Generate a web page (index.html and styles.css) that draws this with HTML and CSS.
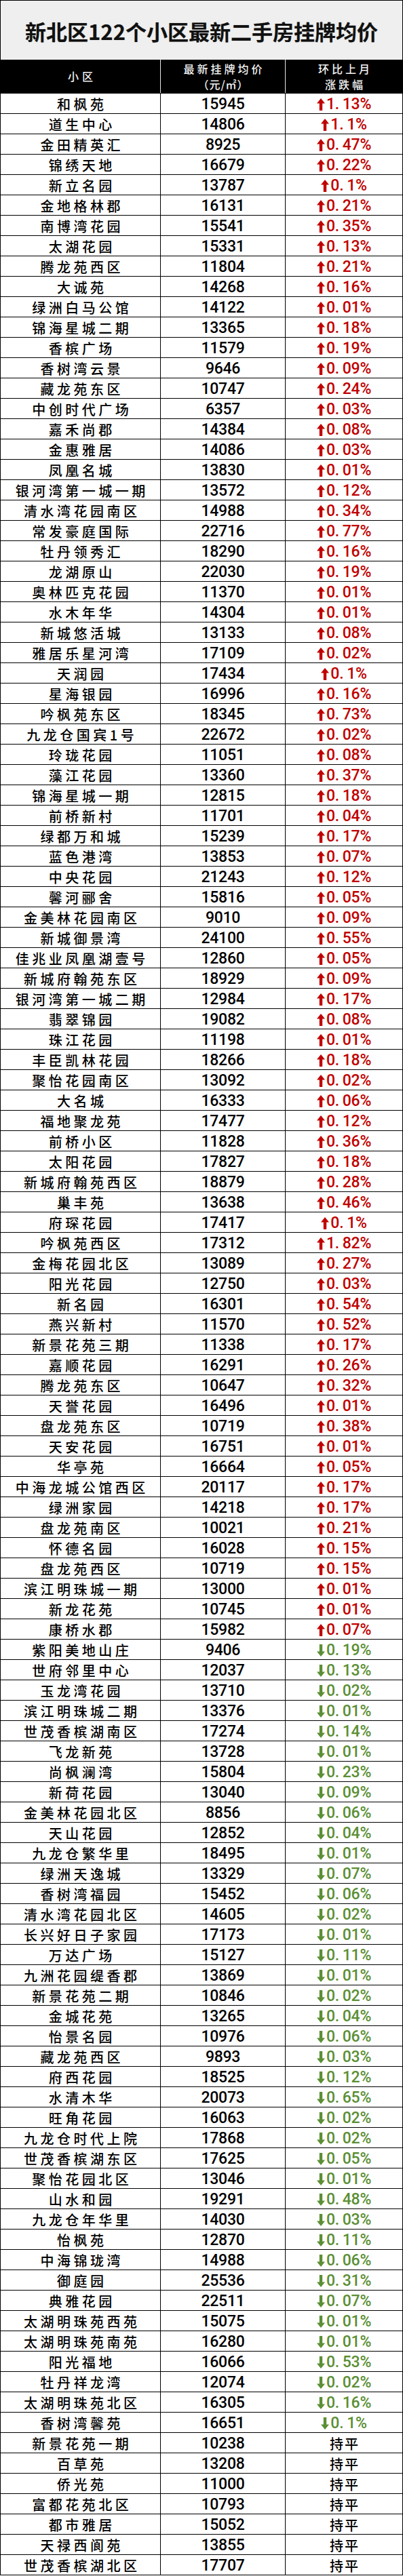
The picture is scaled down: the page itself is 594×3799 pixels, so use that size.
FILE: index.html
```html
<!DOCTYPE html>
<html lang="zh-CN">
<head>
<meta charset="utf-8">
<title>新北区122个小区最新二手房挂牌均价</title>
<link rel="stylesheet" href="styles.css">
</head>
<body>
<svg class="defs" width="0" height="0" aria-hidden="true">
  <defs>
    <path id="arrow-up" d="M6 0 L12 7.5 L8.2 7.5 L8.2 18 L3.8 18 L3.8 7.5 L0 7.5 Z"/>
    <path id="arrow-down" d="M6 18 L12 10.5 L8.2 10.5 L8.2 0 L3.8 0 L3.8 10.5 L0 10.5 Z"/>
  </defs>
</svg>
<div class="sheet">
  <div class="title">新北区122个小区最新二手房挂牌均价</div>
  <div class="row head">
    <div class="cell"><span class="hl">小区</span></div>
    <div class="cell col"><span class="hl">最新挂牌均价</span><span class="hl unit">（元/㎡）</span></div>
    <div class="cell col"><span class="hl">环比上月</span><span class="hl">涨跌幅</span></div>
  </div>
  <div id="rows"></div>
</div>
<script src="app.js"></script>
</body>
</html>
```

FILE: app.js
```js
var data = [
["和枫苑",15945,"u","1.13"],["道生中心",14806,"u","1.1"],["金田精英汇",8925,"u","0.47"],["锦绣天地",16679,"u","0.22"],
["新立名园",13787,"u","0.1"],["金地格林郡",16131,"u","0.21"],["南博湾花园",15541,"u","0.35"],["太湖花园",15331,"u","0.13"],
["腾龙苑西区",11804,"u","0.21"],["大诚苑",14268,"u","0.16"],["绿洲白马公馆",14122,"u","0.01"],["锦海星城二期",13365,"u","0.18"],
["香槟广场",11579,"u","0.19"],["香树湾云景",9646,"u","0.09"],["藏龙苑东区",10747,"u","0.24"],["中创时代广场",6357,"u","0.03"],
["嘉禾尚郡",14384,"u","0.08"],["金惠雅居",14086,"u","0.03"],["凤凰名城",13830,"u","0.01"],["银河湾第一城一期",13572,"u","0.12"],
["清水湾花园南区",14988,"u","0.34"],["常发豪庭国际",22716,"u","0.77"],["牡丹领秀汇",18290,"u","0.16"],["龙湖原山",22030,"u","0.19"],
["奥林匹克花园",11370,"u","0.01"],["水木年华",14304,"u","0.01"],["新城悠活城",13133,"u","0.08"],["雅居乐星河湾",17109,"u","0.02"],
["天润园",17434,"u","0.1"],["星海银园",16996,"u","0.16"],["吟枫苑东区",18345,"u","0.73"],["九龙仓国宾1号",22672,"u","0.02"],
["玲珑花园",11051,"u","0.08"],["藻江花园",13360,"u","0.37"],["锦海星城一期",12815,"u","0.18"],["前桥新村",11701,"u","0.04"],
["绿都万和城",15239,"u","0.17"],["蓝色港湾",13853,"u","0.07"],["中央花园",21243,"u","0.12"],["馨河郦舍",15816,"u","0.05"],
["金美林花园南区",9010,"u","0.09"],["新城御景湾",24100,"u","0.55"],["佳兆业凤凰湖壹号",12860,"u","0.05"],["新城府翰苑东区",18929,"u","0.09"],
["银河湾第一城二期",12984,"u","0.17"],["翡翠锦园",19082,"u","0.08"],["珠江花园",11198,"u","0.01"],["丰臣凯林花园",18266,"u","0.18"],
["聚怡花园南区",13092,"u","0.02"],["大名城",16333,"u","0.06"],["福地聚龙苑",17477,"u","0.12"],["前桥小区",11828,"u","0.36"],
["太阳花园",17827,"u","0.18"],["新城府翰苑西区",18879,"u","0.28"],["巢丰苑",13638,"u","0.46"],["府琛花园",17417,"u","0.1"],
["吟枫苑西区",17312,"u","1.82"],["金梅花园北区",13089,"u","0.27"],["阳光花园",12750,"u","0.03"],["新名园",16301,"u","0.54"],
["燕兴新村",11570,"u","0.52"],["新景花苑三期",11338,"u","0.17"],["嘉顺花园",16291,"u","0.26"],["腾龙苑东区",10647,"u","0.32"],
["天誉花园",16496,"u","0.01"],["盘龙苑东区",10719,"u","0.38"],["天安花园",16751,"u","0.01"],["华亭苑",16664,"u","0.05"],
["中海龙城公馆西区",20117,"u","0.17"],["绿洲家园",14218,"u","0.17"],["盘龙苑南区",10021,"u","0.21"],["怀德名园",16028,"u","0.15"],
["盘龙苑西区",10719,"u","0.15"],["滨江明珠城一期",13000,"u","0.01"],["新龙花苑",10745,"u","0.01"],["康桥水郡",15982,"u","0.07"],
["紫阳美地山庄",9406,"d","0.19"],["世府邻里中心",12037,"d","0.13"],["玉龙湾花园",13710,"d","0.02"],["滨江明珠城二期",13376,"d","0.01"],
["世茂香槟湖南区",17274,"d","0.14"],["飞龙新苑",13728,"d","0.01"],["尚枫澜湾",15804,"d","0.23"],["新荷花园",13040,"d","0.09"],
["金美林花园北区",8856,"d","0.06"],["天山花园",12852,"d","0.04"],["九龙仓繁华里",18495,"d","0.01"],["绿洲天逸城",13329,"d","0.07"],
["香树湾福园",15452,"d","0.06"],["清水湾花园北区",14605,"d","0.02"],["长兴好日子家园",17173,"d","0.01"],["万达广场",15127,"d","0.11"],
["九洲花园缇香郡",13869,"d","0.01"],["新景花苑二期",10846,"d","0.02"],["金城花苑",13265,"d","0.04"],["怡景名园",10976,"d","0.06"],
["藏龙苑西区",9893,"d","0.03"],["府西花园",18525,"d","0.12"],["水清木华",20073,"d","0.65"],["旺角花园",16063,"d","0.02"],
["九龙仓时代上院",17868,"d","0.02"],["世茂香槟湖东区",17625,"d","0.05"],["聚怡花园北区",13046,"d","0.01"],["山水和园",19291,"d","0.48"],
["九龙仓年华里",14030,"d","0.03"],["怡枫苑",12870,"d","0.11"],["中海锦珑湾",14988,"d","0.06"],["御庭园",25536,"d","0.31"],
["典雅花园",22511,"d","0.07"],["太湖明珠苑西苑",15075,"d","0.01"],["太湖明珠苑南苑",16280,"d","0.01"],["阳光福地",16066,"d","0.53"],
["牡丹祥龙湾",12074,"d","0.02"],["太湖明珠苑北区",16305,"d","0.16"],["香树湾馨苑",16651,"d","0.1"],
["新景花苑一期",10238,"f",""],["百草苑",13208,"f",""],["侨光苑",11000,"f",""],["富都花苑北区",10793,"f",""],
["都市雅居",15052,"f",""],["天禄西阆苑",13855,"f",""],["世茂香槟湖北区",17707,"f",""]
];
var html = "";
data.forEach(function (r) {
  var pct;
  if (r[2] === "f") {
    pct = '<div class="cell pct flat"><span class="flat-t">持平</span></div>';
  } else {
    var parts = r[3].split(".");
    var cls = r[2] === "u" ? "up" : "down";
    var id = r[2] === "u" ? "arrow-up" : "arrow-down";
    pct = '<div class="cell pct ' + cls + '"><svg class="arr" viewBox="0 0 12 18" width="12" height="18"><use href="#' + id + '"/></svg>' +
      '<span class="pv">' + parts[0] + '<span class="pt">.</span>' + parts[1] + '%</span></div>';
  }
  html += '<div class="row"><div class="cell name"><span class="nm">' + r[0] + '</span></div>' +
    '<div class="cell price">' + r[1] + '</div>' + pct + '</div>';
});
document.getElementById("rows").innerHTML = html;
```

FILE: styles.css
```css
html, body {
  margin: 0;
  padding: 0;
  background: #ffffff;
}

.defs {
  position: absolute;
  width: 0;
  height: 0;
}

.sheet {
  width: 594px;
  box-sizing: border-box;
  border-left: 1px solid #000;
  font-family: "Noto Sans CJK SC", "Noto Sans", sans-serif;
  color: #000;
}

.title {
  height: 88px;
  box-sizing: border-box;
  border-top: 1px solid #000;
  border-right: 1px solid #000;
  background: #efefef;
  display: flex;
  align-items: center;
  justify-content: center;
  padding-top: 2px;
  font-family: "Noto Sans CJK SC", sans-serif;
  font-weight: 700;
  font-size: 31px;
  letter-spacing: 0;
  color: #111;
  text-shadow: 0 0 1px rgba(0, 0, 0, 0.35);
}

.row {
  display: grid;
  grid-template-columns: 236px 184px 1fr;
  height: 30px;
  box-sizing: border-box;
  border-bottom: 1px solid #000;
}

.cell {
  border-right: 1px solid #000;
  display: flex;
  align-items: center;
  justify-content: center;
  overflow: hidden;
  white-space: nowrap;
}

.head {
  height: 50px;
  background: #000;
  border-bottom: 1px solid #000;
}

.head .cell {
  border-right: 1px solid #e6e6e6;
  color: #f2f2f2;
}

.head .cell:last-child {
  border-right-color: #000;
}

.head .col {
  flex-direction: column;
  gap: 0;
}

.hl {
  font-size: 16px;
  line-height: 23px;
  font-weight: 500;
  letter-spacing: 4px;
  padding-left: 4px;
}

.head .cell:first-child .hl {
  letter-spacing: 5px;
  padding-left: 5px;
}

.hl.unit {
  letter-spacing: 1px;
  padding-left: 1px;
}

.name {
  padding-top: 2px;
}

.nm {
  font-size: 20px;
  line-height: 26px;
  font-weight: 500;
  letter-spacing: 4.5px;
  padding-left: 4.5px;
}

.price {
  font-family: Roboto, "Liberation Sans", sans-serif;
  font-weight: 500;
  font-size: 23px;
  letter-spacing: -0.3px;
  padding-top: 3px;
  line-height: 26px;
}

.pct {
  border-right: 1px solid #000;
  padding-top: 3px;
  font-family: Roboto, "Liberation Sans", sans-serif;
  font-weight: 500;
  font-size: 23px;
  line-height: 26px;
}

.pct.up {
  color: #c00000;
}

.pct.down {
  color: #5b8f35;
}

.arr {
  display: block;
  margin-right: 2px;
  margin-top: -1px;
  fill: currentColor;
}

.pv {
  letter-spacing: -0.3px;
}

.pt {
  margin-right: 5px;
}

.flat-t {
  font-family: "Noto Sans CJK SC", sans-serif;
  font-size: 20px;
  font-weight: 500;
  letter-spacing: 2px;
  padding-left: 2px;
  color: #000;
}
```
